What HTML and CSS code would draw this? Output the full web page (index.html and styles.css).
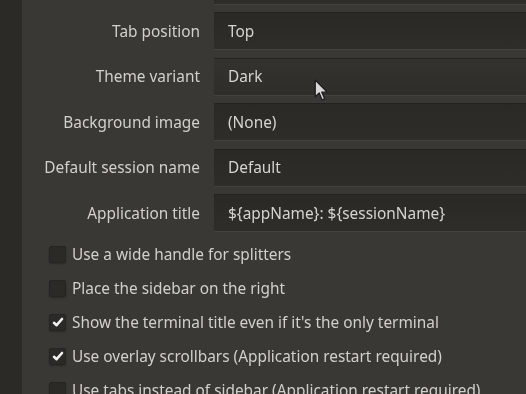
FILE: index.html
```html
<!DOCTYPE html>
<html>
<head>
<meta charset="utf-8">
<link rel="stylesheet" href="styles.css">
</head>
<body>
<div class="page">
  <aside class="sidebar"></aside>
  <main class="content">
    <div class="form">
      <div class="row above"><span class="label"></span><div class="field"></div></div>
      <div class="row"><label class="label">Tab position</label><div class="field">Top</div></div>
      <div class="row"><label class="label">Theme variant</label><div class="field hover">Dark</div></div>
      <div class="row"><label class="label">Background image</label><div class="field">(None)</div></div>
      <div class="row"><label class="label">Default session name</label><div class="field">Default</div></div>
      <div class="row"><label class="label">Application title</label><div class="field">${appName}: ${sessionName}</div></div>
    </div>
    <ul class="checks">
      <li class="check"><span class="box"></span><span>Use a wide handle for splitters</span></li>
      <li class="check"><span class="box"></span><span>Place the sidebar on the right</span></li>
      <li class="check"><span class="box checked"><svg viewBox="0 0 16 16" width="16" height="16"><path d="M4 8.8 L6.6 11.2 L12 5" fill="none" stroke="#f2f1ef" stroke-width="2.6" stroke-linecap="round" stroke-linejoin="round"/></svg></span><span>Show the terminal title even if it's the only terminal</span></li>
      <li class="check"><span class="box checked"><svg viewBox="0 0 16 16" width="16" height="16"><path d="M4 8.8 L6.6 11.2 L12 5" fill="none" stroke="#f2f1ef" stroke-width="2.6" stroke-linecap="round" stroke-linejoin="round"/></svg></span><span>Use overlay scrollbars (Application restart required)</span></li>
      <li class="check"><span class="box"></span><span>Use tabs instead of sidebar (Application restart required)</span></li>
    </ul>
  </main>
  <svg class="cursor" width="15" height="23" viewBox="0 0 14 22"><path d="M1 1 L1 17 L4.8 13.4 L7.6 20 L10 19 L7.3 12.6 L12.4 12.6 Z" fill="#d9d8d5" stroke="#1e1d1b" stroke-width="1.2" stroke-linejoin="round"/></svg>
</div>
</body>
</html>
```
FILE: styles.css
```css
html, body {
  margin: 0;
  padding: 0;
  width: 526px;
  height: 394px;
  overflow: hidden;
  background: #3a3834;
}
body {
  font-family: "Noto Sans", "Open Sans", sans-serif;
  font-size: 15.4px;
  color: #d2d0cc;
}
.page {
  position: relative;
  display: flex;
  height: 394px;
  overflow: hidden;
  filter: blur(0.45px);
}
.sidebar {
  width: 22px;
  flex: none;
  background: #2b2a27;
}
.content {
  flex: 1;
  min-width: 0;
}
.form {
  margin-top: -33.5px;
  display: flex;
  flex-direction: column;
  gap: 7.5px;
}
.row {
  display: grid;
  grid-template-columns: 178px 1fr;
  column-gap: 14px;
  align-items: center;
}
.label {
  text-align: right;
  white-space: nowrap;
}
.field {
  height: 38px;
  box-sizing: border-box;
  padding-left: 14px;
  display: flex;
  align-items: center;
  background: linear-gradient(#2a2926, #2e2d2a);
  border-top: 1px solid #232220;
  border-bottom: 1px solid #44423e;
  color: #d6d4d0;
  white-space: nowrap;
}
.field.hover {
  background: linear-gradient(#34322f, #302e2b);
}
.checks {
  list-style: none;
  margin: 5px 0 0;
  padding: 0 0 0 27px;
}
.check {
  height: 34px;
  display: flex;
  align-items: center;
  gap: 6px;
  white-space: nowrap;
}
.box {
  width: 17px;
  height: 17px;
  flex: none;
  border-radius: 3px;
  background: #2b2a27;
  box-shadow: inset 0 0 0 1px #262523, 0 1px 2px rgba(0,0,0,0.25);
  display: flex;
  align-items: center;
  justify-content: center;
}
.cursor {
  position: absolute;
  left: 314px;
  top: 79px;
}
```
